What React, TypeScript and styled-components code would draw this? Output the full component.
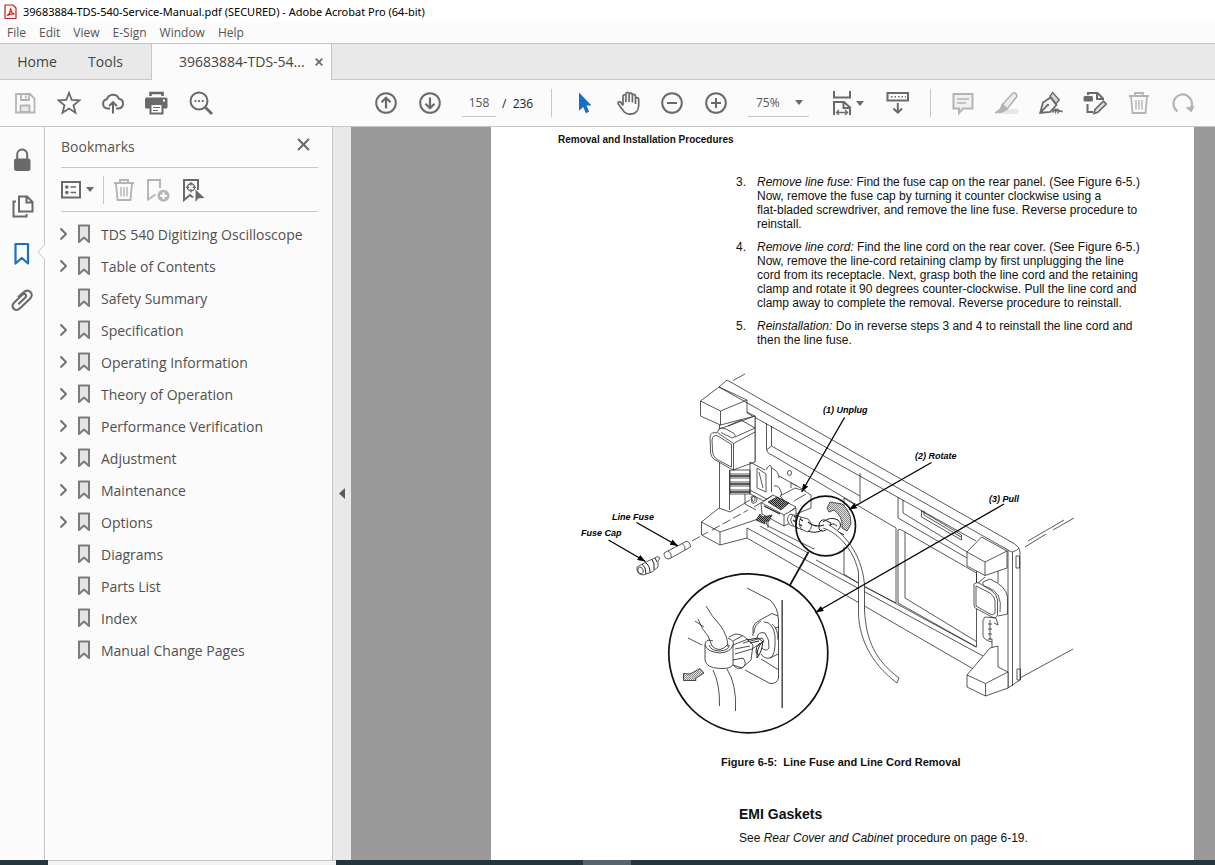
import React from "react";
import styled, { createGlobalStyle } from "styled-components";

const ui = `"Open Sans", "Noto Sans", sans-serif`;
const doc = `"Liberation Sans", Arial, sans-serif`;
const line = "#c6c6c6";
const dark = "#6a6a6a";
const faded = "#b4b4b4";

const GlobalStyle = createGlobalStyle`
  * { box-sizing: border-box; }
  body { margin: 0; font-family: ${ui}; background: #fbfbfb; }
  button { border: 0; padding: 0; background: none; font-family: inherit; cursor: pointer; }
  h1, h2, p, ul, ol, figure { margin: 0; padding: 0; }
  svg { flex: none; }
`;

const Window = styled.div`
  display: flex;
  flex-direction: column;
  height: 100vh;
  overflow: hidden;
  background: #fbfbfb;
`;

const TitleBar = styled.header`
  display: flex;
  align-items: center;
  gap: 5px;
  flex: none;
  height: 23px;
  padding-left: 3px;
  background: #fff;
`;

const WindowTitle = styled.h1`
  font-family: "Noto Sans", "Open Sans", sans-serif;
  font-size: 11px;
  font-weight: 400;
  color: #000;
  white-space: nowrap;
`;

const MenuBar = styled.nav`
  display: flex;
  flex: none;
  gap: 13px;
  height: 21px;
  padding-left: 7px;
  border-bottom: 1px solid ${line};
`;

const MenuItem = styled.button`
  font-size: 12px;
  line-height: 20px;
  color: #555;
`;

const TabBar = styled.div`
  display: flex;
  flex: none;
  height: 36px;
  background: #e9e9e9;
  box-shadow: inset 0 -1px ${line};
`;

const PlainTab = styled.button<{ $width: number }>`
  width: ${(p) => p.$width}px;
  font-size: 14px;
  line-height: 34px;
  color: #444;
`;

const DocumentTab = styled.div`
  display: flex;
  align-items: center;
  justify-content: space-between;
  width: 181px;
  margin-left: 14px;
  padding: 0 8px 2px 27px;
  border: solid ${line};
  border-width: 0 1px;
  background: #fbfbfb;
`;

const TabName = styled.button`
  font-size: 14px;
  color: #444;
`;

const Toolbar = styled.div`
  display: flex;
  align-items: center;
  flex: none;
  height: 47px;
  border-bottom: 1px solid ${line};
`;

const ToolGroup = styled.div<{ $left: number }>`
  display: flex;
  align-items: center;
  flex: none;
  margin-left: ${(p) => p.$left}px;
`;

const ToolSpacer = styled.div`
  flex: 0 1 141px;
`;

const IconButton = styled.button<{ $width?: number; $gap?: number; $faded?: boolean; $active?: boolean }>`
  display: flex;
  align-items: center;
  justify-content: center;
  flex: none;
  gap: ${(p) => p.$gap ?? 0}px;
  width: ${(p) => p.$width ?? 44}px;
  height: 47px;
  color: ${(p) => (p.$active ? "#1b6fc2" : p.$faded ? faded : dark)};
`;

const Separator = styled.div<{ $gap: number }>`
  flex: none;
  width: 1px;
  height: 28px;
  margin: 0 10px 0 ${(p) => p.$gap}px;
  background: ${line};
`;

const PageInput = styled.input`
  width: 34px;
  height: 28px;
  margin-left: 10px;
  padding: 0;
  border: 0;
  border-bottom: 1px solid ${line};
  background: none;
  font: 12px ${ui};
  color: #555;
  text-align: center;
`;

const PageTotal = styled.span`
  width: 55px;
  padding-left: 6px;
  font-size: 12px;
  color: #222;
  white-space: pre;
`;

const ZoomBox = styled.div`
  display: flex;
  align-items: center;
  width: 61px;
  height: 28px;
  margin: 0 18px 0 10px;
  padding-right: 6px;
  border-bottom: 1px solid ${line};
  color: ${dark};
`;

const ZoomSelect = styled.select`
  flex: 1;
  min-width: 0;
  padding: 0 0 0 8px;
  border: 0;
  appearance: none;
  background: none;
  font: 12px ${ui};
  color: #555;
`;

const Workspace = styled.div`
  display: flex;
  flex: 1;
  min-height: 0;
`;

const Rail = styled.nav`
  position: relative;
  flex: none;
  width: 45px;
  padding-top: 9px;
  border-right: 1px solid ${line};
`;

const Notch = styled.svg`
  position: absolute;
  top: 117px;
  right: -1px;
`;

const Panel = styled.aside`
  flex: none;
  width: 288px;
  padding: 0 14px 0 16px;
  border-right: 1px solid ${line};
`;

const PanelHeader = styled.div`
  display: flex;
  align-items: center;
  justify-content: space-between;
  height: 41px;
  padding: 0 8px 2px 0;
  border-bottom: 1px solid ${line};
`;

const PanelTitle = styled.h2`
  font-size: 14px;
  font-weight: 400;
  color: #555;
`;

const PanelTools = styled.div`
  display: flex;
  align-items: center;
  height: 44px;
  border-bottom: 1px solid ${line};
`;

const BookmarkList = styled.ul`
  padding-top: 6px;
  list-style: none;
`;

const BookmarkRow = styled.li`
  display: flex;
  align-items: center;
  height: 32px;
`;

const Toggle = styled.span`
  display: flex;
  width: 16px;
  color: ${dark};
`;

const BookmarkLink = styled.a`
  display: flex;
  align-items: center;
  gap: 10px;
  font-size: 14px;
  color: #505050;
  text-decoration: none;
  white-space: nowrap;
`;

const Splitter = styled.button`
  display: flex;
  align-items: center;
  justify-content: center;
  flex: none;
  width: 18px;
  background: #e9e9e9;
  color: #5a5a5a;
`;

const Viewer = styled.main`
  flex: 1;
  min-width: 0;
  padding: 0 21px 0 140px;
  overflow: hidden;
  background: #999;
`;

const Sheet = styled.article`
  min-height: 100%;
  padding: 6px 0 0 67px;
  background: #fff;
  font-family: ${doc};
  font-size: 12px;
  line-height: 14px;
  color: #111;
  white-space: nowrap;
`;

const RunningHead = styled.p`
  font-size: 10px;
  font-weight: 700;
`;

const Steps = styled.ol`
  display: flex;
  flex-direction: column;
  gap: 9px;
  margin: 28px 0 0 178px;
  list-style: none;
`;

const Step = styled.li`
  display: grid;
  grid-template-columns: 21px 1fr;
`;

const Figure = styled.figure`
  padding: 18px 0 0 12px;
`;

const Drawing = styled.svg`
  display: block;
  overflow: visible;
`;

const Caption = styled.figcaption`
  padding: 10px 0 0 151px;
  font-size: 11px;
  font-weight: 700;
  white-space: pre;
`;

const Section = styled.section`
  padding: 35px 0 0 181px;
`;

const SectionTitle = styled.h2`
  margin-bottom: 7px;
  font-size: 14px;
  line-height: 20px;
`;

const TaskBar = styled.footer`
  display: flex;
  flex: none;
  height: 5px;
  background: #24353c;
`;

const TaskPiece = styled.div<{ $left: number; $width: number; $tone: string; $edge?: boolean }>`
  width: ${(p) => p.$width}px;
  margin-left: ${(p) => p.$left}px;
  background: ${(p) => p.$tone};
  border-top: ${(p) => (p.$edge ? `1px solid ${line}` : "0")};
`;

function Icon({ size = 24, w = 2, children }: { size?: number; w?: number; children: React.ReactNode }) {
  return (
    <svg width={size} height={size} viewBox="0 0 24 24" fill="none" stroke="currentColor" strokeWidth={w} aria-hidden="true">
      {children}
    </svg>
  );
}

const Caret = () => (
  <svg width="8" height="5" viewBox="0 0 8 5" aria-hidden="true">
    <path d="M0 0h8L4 5z" fill="currentColor" />
  </svg>
);

const TrashIcon = () => (
  <Icon w={1.8}>
    <path d="M2 5h20M8 4.500V2h8v2.500M4 5l1.500 17h13L20 5" />
    <path d="M9 9v9.500M12 9v9.500M15 9v9.500" strokeWidth="1.400" />
  </Icon>
);
const SaveIcon = () => (
  <Icon w={1.8}>
    <path d="M3 3h14l4.500 4.500V21.500H3z" />
    <path d="M8 3v6h8V3M12.800 4.500v3" />
    <path d="M7.500 21v-6.500h9V21z" fill="#e9e9e9" />
  </Icon>
);
const StarIcon = () => (
  <Icon w={1.8}>
    <path d="M12 1.800l2.700 7.200 7.800.400-6 4.900 2 7.500-6.500-4.200-6.500 4.200 2-7.500-6-4.900 7.800-.4z" />
  </Icon>
);
const CloudIcon = () => (
  <Icon>
    <path d="M9 17.500H6.500a4.700 4.700 0 0 1-.6-9.300A6.400 6.400 0 0 1 18 7.800a4.900 4.900 0 0 1-.5 9.700H15" />
    <path d="M12 22.500V11.500M8.200 15L12 11.200l3.800 3.800" />
  </Icon>
);
const PrintIcon = () => (
  <Icon>
    <path d="M5.500 5V2h12V5" strokeWidth="2.600" />
    <rect x="0" y="6.500" width="22.500" height="11" rx="1.500" fill="currentColor" stroke="none" />
    <path d="M18 9.500h2" stroke="#fff" />
    <rect x="5.500" y="13" width="12" height="9.500" fill="#fff" />
    <path d="M8 16.500h7M8 19.500h5" strokeWidth="1.200" />
  </Icon>
);
const FindIcon = () => (
  <Icon>
    <circle cx="10" cy="10" r="8.500" />
    <path d="M16 16l7 7" strokeWidth="2.800" />
    <path d="M5.600 10h1.800M9.200 10H11M12.800 10h1.800" />
  </Icon>
);
const UpIcon = () => (
  <Icon>
    <circle cx="12" cy="12" r="9.800" />
    <path d="M12 17.500V7M7.500 11.200L12 6.800l4.500 4.400" strokeWidth="2.200" />
  </Icon>
);
const DownIcon = () => (
  <Icon>
    <circle cx="12" cy="12" r="9.800" />
    <path d="M12 6.500V17M7.500 12.800l4.500 4.400 4.500-4.400" strokeWidth="2.200" />
  </Icon>
);
const PointerIcon = () => (
  <Icon>
    <path d="M7 1.500v18.300l4.200-3.900 2.700 6.300 3.300-1.400-2.700-6.200h5z" fill="currentColor" stroke="none" />
  </Icon>
);
const HandIcon = () => (
  <Icon w={1.700}>
    <path d="M7 14.500V5.200c0-2.200 2.900-2.200 2.900 0M9.900 11V3c0-2.200 3.200-2.200 3.200 0v8M13.100 4c0-2.400 3.300-2.400 3.300 0v7.500M16.400 5c0-2.100 3.100-2.100 3.100 0v8M19.500 8.200c0-2 3.200-2 3.200 0v6.300c0 5.500-3.500 8.700-8.700 8.700-4.400 0-6-2.200-8.100-5.400L2.300 13c-1-1.900 1.200-3 2.500-1.600l2.200 3" />
  </Icon>
);
const MinusIcon = () => (
  <Icon>
    <circle cx="12" cy="12" r="9.800" />
    <path d="M7 12h10" />
  </Icon>
);
const PlusIcon = () => (
  <Icon>
    <circle cx="12" cy="12" r="9.800" />
    <path d="M7 12h10M12 7v10" />
  </Icon>
);
const FitIcon = () => (
  <Icon>
    <path d="M4 0v6.500h16V0M4 24V11h10l6 5.500V24M13.500 11v6H20" />
    <path d="M7 21.500h10M9 19l-2.500 2.500L9 24M15 19l2.500 2.500L15 24" strokeWidth="1.400" />
  </Icon>
);
const ReadIcon = () => (
  <Icon>
    <rect x="1.500" y="2" width="20.500" height="7.500" />
    <path d="M5 5.700h1.500M8.500 5.700H10M12 5.700h1.500M15.500 5.700H17M18.800 5.700h1" strokeWidth="1.500" />
    <path d="M11.800 12v9.500M7.500 17.500l4.300 4.200 4.300-4.200" />
  </Icon>
);
const NoteIcon = () => (
  <Icon>
    <path d="M2.500 3h19v14.500H12L8 22v-4.500H2.500z" fill="#f0f0f0" />
    <path d="M6 8h12M6 12h9" strokeWidth="1.400" />
  </Icon>
);
const MarkerIcon = () => (
  <Icon w={1.600}>
    <path d="M11 18h12v5H8z" fill="#e7e7e7" stroke="none" />
    <path d="M7.500 13.500L17.500 2.500c2-1.600 5.500 1 4 3.500L12 18z" fill="#ededed" />
    <path d="M7.500 13.500L5 18.500l-4 3h5.500l5-3z" fill="currentColor" />
  </Icon>
);
const SignIcon = () => (
  <Icon w={1.800}>
    <path d="M11.500 6.500L4 11.500 1.200 22l10-1.200 6.200-6.800zM1.500 21.700l6.500-7" />
    <path d="M11 5.200l2.600-3.700 6.600 7.200-3 4z" fill="#d4d4d4" strokeWidth="1.400" />
    <circle cx="8.800" cy="14" r="1.300" fill="currentColor" stroke="none" />
    <path d="M13.500 21.500c2.500-4 3.300-4 3.300-1.200 1.800-3 2.500-2.200 2.500.600 1.500-2.200 2.200-1 4.200 0" />
  </Icon>
);
const EditPdfIcon = () => (
  <Icon>
    <rect x=".5" y="5" width="9.500" height="5.500" rx="1.500" fill="currentColor" stroke="none" />
    <path d="M5 4V2h9.500L20 7.500V9M14 2v6h6M4.500 13v8H10" />
    <path d="M11 22.500l1-4 8.500-8.300 2.800 2.800-8.500 8.300z" fill="#ddd" strokeWidth="1.700" />
  </Icon>
);
const RotateIcon = () => (
  <Icon w={2.200}>
    <path d="M6.500 20.500A9.300 9.300 0 1 1 20 17" />
    <path d="M14.500 16.500l6 5 3-6.500z" fill="currentColor" stroke="none" />
  </Icon>
);
const LockIcon = () => (
  <Icon>
    <rect x="4" y="10.500" width="16.500" height="12.500" rx="2.500" fill="currentColor" stroke="none" />
    <path d="M7.200 11V6.500a5 5 0 0 1 10 0V11" />
  </Icon>
);
const PagesIcon = () => (
  <Icon>
    <path d="M9 1.500h8l5.500 5.500v9.500H9zM16.500 1.500V7.500h6M6 6.500H3.500V21.500h13V19" />
  </Icon>
);
const RailBookmarkIcon = () => (
  <Icon w={2.200}>
    <path d="M5.500 2h12.500v19.500l-6.200-5.500-6.300 5.500z" strokeLinejoin="round" />
  </Icon>
);
const ClipIcon = () => (
  <Icon w={2.100}>
    <path d="M8.300 15.200l7-6.800c2.200-2.200-.6-4.800-2.700-2.800L4 13.700c-4.200 4.300 1.500 9.900 6 5.600l10-9.500c4.800-5-1.500-11-6.700-6.200L8 8.400" />
  </Icon>
);
const OptionsIcon = () => (
  <svg width="20" height="18" viewBox="0 0 20 18" fill="none" stroke="currentColor" strokeWidth="2" aria-hidden="true">
    <rect x="1" y="1" width="18" height="15.500" />
    <circle cx="5.800" cy="6" r="1.800" fill="currentColor" stroke="none" />
    <circle cx="5.800" cy="11.500" r="1.800" fill="currentColor" stroke="none" />
    <path d="M9.500 6H15M9.500 11.500H15" strokeWidth="1.600" />
  </svg>
);
const AddBookmarkIcon = () => (
  <Icon w={1.900}>
    <path d="M9.500 16.500L2 21.500V2h12v8" />
    <circle cx="17.500" cy="17.800" r="6" fill="currentColor" stroke="none" />
    <path d="M14 17.800h7M17.500 14.300v7" stroke="#fff" />
  </Icon>
);
const FindBookmarkIcon = () => (
  <Icon w={2}>
    <path d="M17 12V2H3V22l6-5 3 2.500" />
    <circle cx="10" cy="9.300" r="3.600" strokeWidth="1.400" />
    <path d="M10 4v3.500M10 11v3.500M4.800 9.300h3.400M11.700 9.300H15" strokeWidth="1.300" />
    <path d="M14.500 11.500v12.500l3-3.700 6-.3z" fill="currentColor" stroke="none" />
  </Icon>
);

const PdfLogo = () => (
  <svg width="15" height="16" viewBox="0 0 15 16" fill="none" aria-hidden="true">
    <path d="M2 1h8l3 3v10.500H2z" fill="#fff2f0" stroke="#b3251e" strokeWidth="1.200" strokeLinejoin="round" />
    <path d="M4 11.800c2-1.300 3.600-4 3.500-7.600.4 3.600 1.600 5.200 4 5.800-2.400-.5-5 .1-7.500 1.800z" stroke="#d3261e" strokeWidth="1.300" />
  </svg>
);

const CloseIcon = ({ size, w }: { size: number; w: number }) => (
  <svg width={size} height={size} viewBox="0 0 12 12" stroke={dark} strokeWidth={w} aria-hidden="true">
    <path d="M1 1l10 10M11 1L1 11" />
  </svg>
);

const bookmarks: [string, boolean][] = [
  ["TDS 540 Digitizing Oscilloscope", true],
  ["Table of Contents", true],
  ["Safety Summary", false],
  ["Specification", true],
  ["Operating Information", true],
  ["Theory of Operation", true],
  ["Performance Verification", true],
  ["Adjustment", true],
  ["Maintenance", true],
  ["Options", true],
  ["Diagrams", false],
  ["Parts List", false],
  ["Index", false],
  ["Manual Change Pages", false],
];

const menus = ["File", "Edit", "View", "E-Sign", "Window", "Help"];

const steps = [
  {
    n: 3,
    lead: "Remove line fuse:",
    lines: [
      " Find the fuse cap on the rear panel. (See Figure 6-5.)",
      "Now, remove the fuse cap by turning it counter clockwise using a",
      "flat-bladed screwdriver, and remove the line fuse. Reverse procedure to",
      "reinstall.",
    ],
  },
  {
    n: 4,
    lead: "Remove line cord:",
    lines: [
      " Find the line cord on the rear cover. (See Figure 6-5.)",
      "Now, remove the line-cord retaining clamp by first unplugging the line",
      "cord from its receptacle. Next, grasp both the line cord and the retaining",
      "clamp and rotate it 90 degrees counter-clockwise. Pull the line cord and",
      "clamp away to complete the removal. Reverse procedure to reinstall.",
    ],
  },
  {
    n: 5,
    lead: "Reinstallation:",
    lines: [" Do in reverse steps 3 and 4 to reinstall the line cord and", "then the line fuse."],
  },
];

function RearPanelDrawing() {
  return (
    <Drawing width="520" height="380" viewBox="570 365 520 380" role="img" aria-label="Line fuse and line cord removal">
      <defs>
        <marker id="tip" viewBox="0 0 8 6" refX="8" refY="3" markerWidth="8" markerHeight="6" markerUnits="userSpaceOnUse" orient="auto">
          <path d="M0 0L8 3L0 6z" fill="#000" />
        </marker>
        <pattern id="dense" width="2" height="2" patternUnits="userSpaceOnUse">
          <rect width="2" height="2" fill="#999" />
          <rect width="1" height="1" fill="#222" />
          <rect x="1" y="1" width="1" height="1" fill="#222" />
        </pattern>
        <pattern id="light" width="2" height="2" patternUnits="userSpaceOnUse">
          <rect width="2" height="2" fill="#e4e4e4" />
          <rect width="1" height="1" fill="#888" />
          <rect x="1" y="1" width="1" height="1" fill="#888" />
        </pattern>
      </defs>
      <g fill="none" stroke="#222" strokeWidth=".75">
        {/* chassis frame and its long rails */}
        <path d="M733 380.500L745 374M719 387L727 380L1014 543.500Q1020 547 1020 552V680L1008 688V550L719 387M1008 550Q1011 552 1012.500 552Q1018 550 1019 548M1012.500 552V686" />
        <path d="M747 400V413L976 541M747 528V538L975 670M747 528L983 656M760 526L808 553M816 560L976 647" />
        <path d="M1028 541L1064 520M1025 547L1046 534M1053 530L1074 518M1020 678L1073 649M1016 556h3.500v12h-3.500zM1017 669h3.500v11h-3.500z" />
        {/* left feet */}
        <path d="M719 387L700.500 401V416L720.500 425V411L700.500 401M720.500 411L747 400L719 387M720.500 425L755 416L747 412" />
        <path d="M701.500 522V535L720 545V532L701.500 522L719 508L730 512L750 500M720 532L761 518M720 545L747 538M719.500 425V508M729.500 470V510M755 416V462" />
        {/* left knob */}
        <path fill="#fff" d="M719 429L728 426L755 416V462L733 470L717 461Q710 458 710.500 450L710 437Q711 431 717 433z" />
        <path d="M733.500 443.500V470M731.500 444.500V467L718 460Q712.500 457 712.500 450L712 440Q713 434 718 436L731.500 444.500M733.500 443.500L755 432M718 433L733.500 443.500M719 429Q721 427 726 429L734 433.500Q737 437 732 438L721 432.500M735 437L755 428M728 426L741 420L755 428" />
        {/* left opening */}
        <path d="M766.500 423V448Q767 454 772 455L896 528V603L865 587M771.500 426V446L860 496M860 473V502M766.500 450L771.500 446M844 498L855 505M898 497V518L967 558M903 500V513L967 552M921.500 511L961.500 535V540L921.500 517zM924 511V515L961 537" />
        <path d="M898 530Q899 528 905 532L976.500 573V647L898 603zM905 532V598L976.500 641.500M844 498V506M858 583L844 574V547M814 548V549L770 527Q765 525 767 520M768 519V528" />
        {/* vents */}
        <path d="M730 470H750V494H730zM730 474h20M730 478h20M730 482h20M730 486h20M730 490h20" />
        <path d="M730 476h20M730 484h20M730 492h20" strokeWidth="1.300" />
        {/* upper right foot */}
        <path fill="#fff" d="M981.500 537L967 552V566L985 575.500L1007 568V551L981.500 537" />
        <path d="M985 575.500V562L1007 551M967 552L985 562M998 571V583M976.500 571V584" />
        {/* right knob */}
        <path fill="#fff" d="M983 582L990 579Q1006 586 1007.500 597V614L998 616M983 582Q982 586 987 587Q1003 592 1000 612M974 584Q976 582 979 583L992 591Q997 595 997.500 600V615Q996 619 992 617L977 609Q974 608 974 605zM976 586L990 593Q995 597 995 601V613Q993 616 990 614L976 606zM978 583L985 577" />
        <path d="M984 620Q983 618 985 617L996 618L998 625L994 623M983 620V636Q984 640 992 642M990 620V640M988 624h4M988 629h4M988 634h4M988 639h4V648" />
        {/* lower right foot */}
        <path fill="#fff" d="M990 648L967 675V687L985.500 696L1008 688V672L998 667V646L990 648M967 675L985.500 683.500L1008 672M985.500 683.500V696" />
        {/* receptacle panel */}
        <path d="M750 462L765 470M750 462V494L782 510M750 490L772 502M757 468V488L766 492V474zM759 472l4 16M766 470Q770 462 771.500 468V492M772 468Q779 472 779 478M774 486Q780 484 782 496M779 476L806 491M745 494V504L756 510M751 497Q755 494 757 499Q757 504 752 503z" />
        <ellipse cx="789.500" cy="473" rx="2" ry="2.500" />
        <ellipse cx="753.500" cy="499" rx="1.600" ry="2.400" />
        {/* line plug */}
        <path fill="#fff" d="M780 496L795 488Q800 490 803 490L811 495V508L796 514zM791 488V483L797 486M794 501L806 494" />
        <path fill="#fff" d="M761 503L773 495L796 507L788 513L784 526L762 514z" />
        <path fill="#fff" d="M784 526V515L796 508V520L784 526M784 515L762 503" />
        <path d="M768 502L777 497L789 503L781 510z" fill="url(#dense)" />
        <path d="M764 506L780 514" strokeWidth="1.200" />
        <path d="M756 520L760 514L763 517L772 515L769 521L765 521V524z" fill="url(#dense)" />
        <path fill="#fff" d="M790 514Q785 519 790 525L808 532Q815 526 808 519z" />
        <path d="M793 515Q788 520 794 526M797 515Q793 522 798 529M801 517Q797 524 802 530" />
        <path d="M794 516l3 2M793 520l3 2M800 519l3 2M799 524l3 2M808 522Q815 528 824 525M808 531Q816 534 822 530" strokeWidth="1.100" />
        {/* retaining clamp and rotation arrow */}
        <path d="M827 508L830 502L842 504Q851 511 851 524L847 531L842 528Q843 516 834 510L829 512z" fill="url(#light)" />
        <path d="M819 525Q820 519 825 520L831 523Q827 532 821 531Q818 530 819 525zM823 522Q830 516 838 520Q843 525 838 530M828 528Q832 521 837 526M837 531L844 535" strokeWidth="1" />
        {/* supply cord */}
        <path d="M823 528C836 532 853 547 858.500 572V610C858 635 869 662 897 683L899 678C875 660 866 640 864.500 610V585C862 552 842 532 829 525" fill="#fff" />
        {/* fuse and its centre line */}
        <path d="M692 541L708 532M712 530L748 510M754 507L772 496" strokeDasharray="9 3" />
        <path d="M664 553L686 541.500Q690 541 690.500 547L669 559Q664 559 664 553zM668 551Q672 553 671 558M682 543.500Q686 546 685 550" />
        <path fill="#fff" d="M637 567L648 561L655 558Q657 555 660 558L658 561L658 567L652 572L643 575Q636 574 637 567z" />
        <path d="M642 564Q646 567 646 574M645 562.500Q650 565 650 572.500M652 559.500Q655 563 654 570M655 558L657 562" strokeWidth="1" />
        <ellipse cx="640.500" cy="570.500" rx="2.600" ry="3.400" transform="rotate(-20 640.500 570.500)" />
      </g>
      {/* enlarged view */}
      <g fill="none" stroke="#111" strokeWidth="1.700">
        <circle cx="748.300" cy="653.300" r="79.500" fill="#fff" />
        <circle cx="825.700" cy="526" r="29.800" />
        <path d="M808.500 552L789.500 586" />
      </g>
      <g fill="none" stroke="#222" strokeWidth=".8">
        <path d="M747 588L770 600Q778 607 778.500 620V678Q777 684 770 683.500L745 670M761 659L778 669.500M753 636V627Q754 623 760 620L772 613.500L778 616" />
        <path d="M782.200 600V708" stroke="#555" strokeWidth="1.600" />
        <path d="M764 622Q773 622 775 636Q776 656 770 658Q764 659 761 654M757 638Q758 631 765 633Q770 640 769 648Q766 652 762 648M761 621Q754 625 754 633M775 628L779 627M770 658L778 654M772 624Q778 628 778 640" />
        <path fill="#fff" d="M729 637L735 634Q743 634 748 640L753 645L751 660L742 668L733 665" />
        <path d="M733 645L748 639M733 660L743 658Q748 664 742 668Q737 670 734 666M733 641L742 636M735 649L750 646M735 654L752 649L764 641L762 638L743 643" />
        <path fill="#fff" d="M705 645V660Q706 668 720 668.500Q730 669 733 665V645Q731 652 720 653Q707 652 705 645Q705 638 713 641" />
        <path d="M733 645Q735 641 728 638M709 645Q711 651 720 651Q730 650 729 645M712 646Q720 654 728 644" />
        <path d="M706 606Q712 617 720 625Q728 636 728 647M698 619Q702 630 708 636L712 646M695 621L704 627M688 638L702 645" />
        <path d="M747 640L758 638L762 641M750 643L759 641M757 658Q756 649 763 641Q762 652 757 658M759 655L756 653Q755 647 760 643" strokeWidth="1" />
        <path d="M713 670Q720 684 719.500 706M727 669Q737 685 735.500 711" />
        <path d="M683.500 673.500V680.500H696L695.500 678.500L704 673L700 668.500L690 674z" fill="url(#light)" />
      </g>
      {/* callouts */}
      <g fill="none" stroke="#000" strokeWidth="1.300">
        <path d="M844.500 417.500L801.700 492" markerEnd="url(#tip)" />
        <path d="M931.500 462.500L849 509.500" markerEnd="url(#tip)" />
        <path d="M1004 504L815.500 612.500" markerEnd="url(#tip)" />
        <path d="M636.500 522.500L678 546" markerEnd="url(#tip)" />
        <path d="M608.500 540L645.500 561.500" markerEnd="url(#tip)" />
      </g>
      <g fill="#000" fontFamily={doc} fontSize="9" fontWeight="700" fontStyle="italic">
        <text x="823" y="413">(1) Unplug</text>
        <text x="915" y="459">(2) Rotate</text>
        <text x="989" y="502">(3) Pull</text>
        <text x="612" y="520">Line Fuse</text>
        <text x="581" y="536">Fuse Cap</text>
      </g>
    </Drawing>
  );
}

export default function App() {
  return (
    <Window>
      <GlobalStyle />
      <TitleBar>
        <PdfLogo />
        <WindowTitle>39683884-TDS-540-Service-Manual.pdf (SECURED) - Adobe Acrobat Pro (64-bit)</WindowTitle>
      </TitleBar>
      <MenuBar>
        {menus.map((m) => (
          <MenuItem key={m}>{m}</MenuItem>
        ))}
      </MenuBar>
      <TabBar>
        <PlainTab $width={74}>Home</PlainTab>
        <PlainTab $width={63}>Tools</PlainTab>
        <DocumentTab>
          <TabName>39683884-TDS-54...</TabName>
          <button aria-label="Close tab">
            <CloseIcon size={8} w={2.600} />
          </button>
        </DocumentTab>
      </TabBar>
      <Toolbar>
        <ToolGroup $left={3}>
          <IconButton $faded aria-label="Save"><SaveIcon /></IconButton>
          <IconButton aria-label="Star"><StarIcon /></IconButton>
          <IconButton aria-label="Upload"><CloudIcon /></IconButton>
          <IconButton aria-label="Print"><PrintIcon /></IconButton>
          <IconButton aria-label="Find"><FindIcon /></IconButton>
        </ToolGroup>
        <ToolSpacer />
        <ToolGroup $left={0}>
          <IconButton aria-label="Previous page"><UpIcon /></IconButton>
          <IconButton aria-label="Next page"><DownIcon /></IconButton>
          <PageInput aria-label="Page number" defaultValue="158" />
          <PageTotal>/  236</PageTotal>
          <Separator $gap={0} />
          <IconButton $active aria-label="Select"><PointerIcon /></IconButton>
          <IconButton aria-label="Pan"><HandIcon /></IconButton>
          <IconButton aria-label="Zoom out"><MinusIcon /></IconButton>
          <IconButton aria-label="Zoom in"><PlusIcon /></IconButton>
          <ZoomBox>
            <ZoomSelect aria-label="Zoom level" defaultValue="75%">
              <option>75%</option>
            </ZoomSelect>
            <Caret />
          </ZoomBox>
          <IconButton $width={40} $gap={2} aria-label="Fit page"><FitIcon /><Caret /></IconButton>
          <IconButton $width={62} aria-label="Page display"><ReadIcon /></IconButton>
          <Separator $gap={1} />
        </ToolGroup>
        <ToolGroup $left={0}>
          <IconButton $faded aria-label="Comment"><NoteIcon /></IconButton>
          <IconButton $faded aria-label="Highlight"><MarkerIcon /></IconButton>
          <IconButton aria-label="Sign"><SignIcon /></IconButton>
          <IconButton aria-label="Edit PDF"><EditPdfIcon /></IconButton>
          <IconButton $faded aria-label="Delete"><TrashIcon /></IconButton>
          <IconButton $faded aria-label="Rotate"><RotateIcon /></IconButton>
        </ToolGroup>
      </Toolbar>
      <Workspace>
        <Rail>
          <IconButton aria-label="Security"><LockIcon /></IconButton>
          <IconButton aria-label="Page thumbnails"><PagesIcon /></IconButton>
          <IconButton $active aria-label="Bookmarks"><RailBookmarkIcon /></IconButton>
          <IconButton aria-label="Attachments"><ClipIcon /></IconButton>
          <Notch width="8" height="16" viewBox="0 0 8 16" aria-hidden="true">
            <path d="M8 0L1 8l7 8" fill="#fbfbfb" stroke={line} />
          </Notch>
        </Rail>
        <Panel>
          <PanelHeader>
            <PanelTitle>Bookmarks</PanelTitle>
            <button aria-label="Close panel">
              <CloseIcon size={13} w={1.900} />
            </button>
          </PanelHeader>
          <PanelTools>
            <IconButton $width={33} $gap={5} aria-label="Options"><OptionsIcon /><Caret /></IconButton>
            <Separator $gap={9} />
            <IconButton $width={20} $faded aria-label="Delete bookmark"><TrashIcon /></IconButton>
            <IconButton $width={48} $faded aria-label="New bookmark"><AddBookmarkIcon /></IconButton>
            <IconButton $width={21} aria-label="Find bookmark"><FindBookmarkIcon /></IconButton>
          </PanelTools>
          <BookmarkList>
            {bookmarks.map(([label, open]) => (
              <BookmarkRow key={label}>
                <Toggle>
                  {open && (
                    <svg width="7" height="14" viewBox="1 0 7 14" fill="none" stroke="currentColor" strokeWidth="1.800" overflow="visible" aria-hidden="true">
                      <path d="M.5 1.500L6 7l-5.500 5.500" />
                    </svg>
                  )}
                </Toggle>
                <BookmarkLink href="#">
                  <svg width="14" height="20" viewBox="0 0 14 20" aria-hidden="true">
                    <path d="M2 1.500h10v16.500l-5-4.500-5 4.500z" fill="#e4e4e4" stroke="#7b7b7b" strokeWidth="2" strokeLinejoin="round" />
                  </svg>
                  {label}
                </BookmarkLink>
              </BookmarkRow>
            ))}
          </BookmarkList>
        </Panel>
        <Splitter aria-label="Collapse panel">
          <svg width="6" height="11" viewBox="0 0 6 11" aria-hidden="true">
            <path d="M6 0v11L0 5.500z" fill="currentColor" />
          </svg>
        </Splitter>
        <Viewer>
          <Sheet>
            <RunningHead>Removal and Installation Procedures</RunningHead>
            <Steps>
              {steps.map((s) => (
                <Step key={s.n}>
                  <span>{s.n}.</span>
                  <p>
                    <em>{s.lead}</em>
                    {s.lines.map((l, i) => (
                      <React.Fragment key={l}>
                        {i > 0 && <br />}
                        {l}
                      </React.Fragment>
                    ))}
                  </p>
                </Step>
              ))}
            </Steps>
            <Figure>
              <RearPanelDrawing />
              <Caption>{"Figure 6-5:  Line Fuse and Line Cord Removal"}</Caption>
            </Figure>
            <Section>
              <SectionTitle>EMI Gaskets</SectionTitle>
              <p>
                See <em>Rear Cover and Cabinet</em> procedure on page 6-19.
              </p>
            </Section>
          </Sheet>
        </Viewer>
      </Workspace>
      <TaskBar>
        <TaskPiece $left={48} $width={288} $tone="#f2f2f2" $edge />
        <TaskPiece $left={247} $width={48} $tone="#56656b" />
      </TaskBar>
    </Window>
  );
}
